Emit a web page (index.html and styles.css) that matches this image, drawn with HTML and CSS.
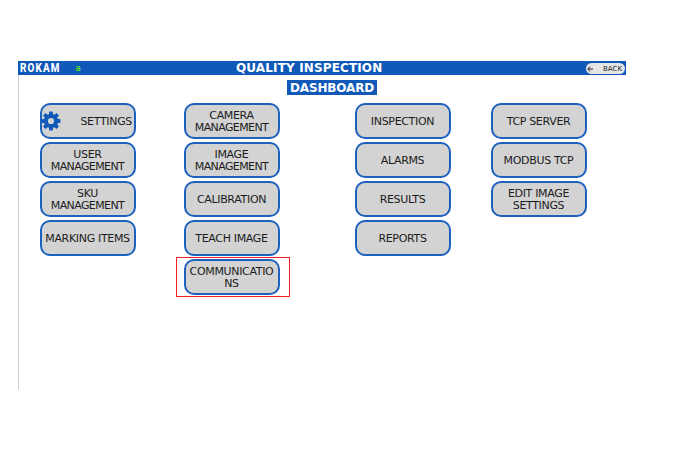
FILE: index.html
```html
<!DOCTYPE html>
<html lang="en">
<head>
<meta charset="utf-8">
<title>Quality Inspection</title>
<link rel="stylesheet" href="styles.css">
</head>
<body>
<main class="screen">
  <header class="topbar">
    <div class="brand"><span class="logo">ROKAM</span><span class="user">a</span></div>
    <h1 class="title"><span>QUALITY INSPECTION</span></h1>
    <button class="back">
      <svg width="6" height="6" viewBox="0 0 6 6"><path d="M6 3H1M3 .6L.7 3L3 5.4" fill="none" stroke="#222" stroke-width="1"/></svg>
      <span>BACK</span>
    </button>
  </header>
  <div class="content">
    <h2 class="subtitle"><span>DASHBOARD</span></h2>
    <nav class="menu">
      <div class="column">
        <button class="tile tile-icon">
          <svg class="gear" width="20" height="20" viewBox="-10 -10 20 20">
            <circle r="5.1" fill="none" stroke="#1059b8" stroke-width="4"/>
            <g fill="#1059b8">
              <path id="tooth" d="M-2.2 -6L-1.7 -9.5H1.7L2.2 -6Z"/>
              <use href="#tooth" transform="rotate(45)"/>
              <use href="#tooth" transform="rotate(90)"/>
              <use href="#tooth" transform="rotate(135)"/>
              <use href="#tooth" transform="rotate(180)"/>
              <use href="#tooth" transform="rotate(225)"/>
              <use href="#tooth" transform="rotate(270)"/>
              <use href="#tooth" transform="rotate(315)"/>
            </g>
          </svg>
          <span>SETTINGS</span>
        </button>
        <button class="tile"><span>USER<br><span class="tight">MANAGEMENT</span></span></button>
        <button class="tile"><span>SKU<br><span class="tight">MANAGEMENT</span></span></button>
        <button class="tile"><span>MARKING ITEMS</span></button>
      </div>
      <div class="column">
        <button class="tile"><span>CAMERA<br><span class="tight">MANAGEMENT</span></span></button>
        <button class="tile"><span>IMAGE<br><span class="tight">MANAGEMENT</span></span></button>
        <button class="tile"><span>CALIBRATION</span></button>
        <button class="tile"><span>TEACH IMAGE</span></button>
        <button class="tile highlighted"><span>COMMUNICATIO<br>NS</span></button>
      </div>
      <div class="column">
        <button class="tile"><span>INSPECTION</span></button>
        <button class="tile"><span>ALARMS</span></button>
        <button class="tile"><span>RESULTS</span></button>
        <button class="tile"><span>REPORTS</span></button>
      </div>
      <div class="column">
        <button class="tile"><span>TCP SERVER</span></button>
        <button class="tile"><span>MODBUS TCP</span></button>
        <button class="tile"><span>EDIT IMAGE<br>SETTINGS</span></button>
      </div>
    </nav>
  </div>
</main>
</body>
</html>
```
FILE: styles.css
```css
* { box-sizing: border-box; }

body {
  margin: 0;
  background: #fff;
  color: #1c1c1c;
  font-family: Verdana, "DejaVu Sans", sans-serif;
}

button {
  margin: 0;
  padding: 0;
  color: inherit;
  font-family: inherit;
}

.screen {
  width: 608px;
  margin: 61px 0 0 18px;
}

.topbar {
  display: grid;
  grid-template-columns: 218px 1fr 40px;
  align-items: center;
  height: 14px;
  background: #1059b8;
}

.brand {
  display: flex;
  align-items: center;
  height: 14px;
  padding-left: 2px;
}

.logo {
  width: 55px;
  color: #fff;
  font: 800 13px/14px Roboto, sans-serif;
  letter-spacing: 1.5px;
  transform: scaleX(0.76);
  transform-origin: left center;
}

.user {
  padding: 2px 0 0 0.5px;
  color: #55d42c;
  font-size: 8px;
  font-weight: bold;
  line-height: 12px;
}

.title,
.subtitle {
  margin: 0;
  color: #fff;
  font-size: 12px;
  line-height: 14px;
  white-space: nowrap;
}

.title {
  letter-spacing: 0.14px;
}

.back {
  display: flex;
  align-items: center;
  justify-content: space-between;
  width: 39px;
  height: 11px;
  padding: 1px 3px 0 1px;
  border: 0;
  border-radius: 6px;
  background: #e4e4e4;
  font-size: 7px;
  line-height: 10px;
}

.content {
  height: 315px;
  padding-top: 5px;
  border-left: 1px solid #d0d0d0;
}

.subtitle {
  width: 90px;
  height: 15px;
  margin-left: 268px;
  background: #1059b8;
  line-height: 16px;
  letter-spacing: -0.15px;
  text-align: center;
}

.menu {
  display: grid;
  grid-template-columns: 144px 171px 136px 96px;
  margin: 8px 0 0 21px;
}

.column {
  display: flex;
  flex-direction: column;
  gap: 3px;
  width: 96px;
}

.tile {
  position: relative;
  display: flex;
  align-items: center;
  justify-content: center;
  height: 36px;
  padding: 2px 1px 0 0;
  border: 2px solid #1b61bd;
  border-radius: 10px;
  background: #d3d3d3;
  font-size: 11px;
  line-height: 12px;
  letter-spacing: -0.33px;
  text-align: center;
  white-space: nowrap;
}

.tight {
  letter-spacing: -0.6px;
}

.tile-icon {
  justify-content: space-between;
  padding-right: 2px;
}

.gear {
  margin: -2px 0 0 -1.5px;
}

.highlighted::after {
  content: "";
  position: absolute;
  inset: -4px -12px -4px -10px;
  border: 1px solid #f22222;
}
```
